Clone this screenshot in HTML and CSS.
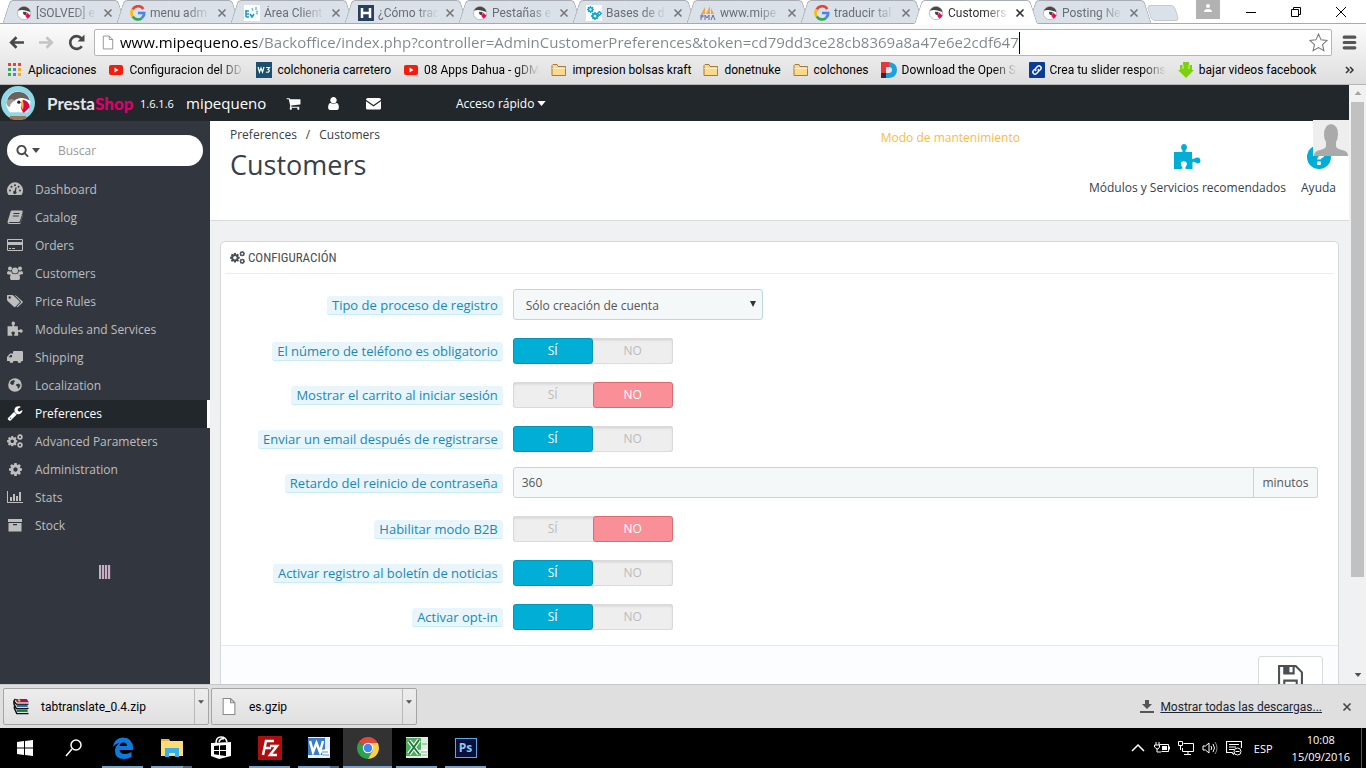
FILE: index.html
```html
<!DOCTYPE html>
<html lang="es">
<head>
    <meta charset="UTF-8">
    <meta name="viewport" content="width=device-width, initial-scale=1.0">
    <title>Customers</title>
    <link rel="stylesheet" href="styles.css">
</head>
<body>
    <!-- Icon sprite -->
    <svg class="sprite" aria-hidden="true">
        <symbol id="puffin" viewBox="0 0 36 36">
            <path d="M5 13C8 5 16 3 22 5c6 1 10 6 11 12l-3 12H8C4 24 3 18 5 13z" fill="#fff"/>
            <path d="M5 14C8 6 15 3 22 5c5 1 9 5 10 10-6-4-12-4-17-1l-5 2z" fill="#6b625d"/>
            <path d="M4 16c3-3 8-3 11-1-4 1-6 4-7 8-3-1-4-4-4-7z" fill="#a39b96"/>
            <circle cx="19" cy="17" r="2" fill="#222"/>
            <path d="M24 14c5 1 8 5 8 9l-7 7c-4-4-5-10-1-16z" fill="#e5004f"/>
            <path d="M23 14c2 3 2 7 1 12-3-3-3-8-1-12z" fill="#f9c032"/>
        </symbol>
        <symbol id="puffin-round" viewBox="0 0 36 36">
            <circle cx="18" cy="18" r="15" fill="#fff" stroke="#b5b9bb" stroke-width="2"/>
            <path d="M4 13C8 5 14 3 20 4c7 1 12 6 12 12l-9-3c-6-2-13-2-19 0z" fill="#4c4644"/>
            <path d="M16 15l8 1-2 7c-5 0-7-4-6-8z" fill="#444"/>
            <path d="M25 17l8 7-7 7-5-6z" fill="#f00b5a"/>
        </symbol>
        <symbol id="google" viewBox="0 0 18 18">
            <path d="M15 4.500A7 7 0 0 0 3 5" fill="none" stroke="#ea4335" stroke-width="3"/>
            <path d="M3 5a7 7 0 0 0 0 8" fill="none" stroke="#fbbc05" stroke-width="3"/>
            <path d="M3 13a7 7 0 0 0 10.500 1.500" fill="none" stroke="#34a853" stroke-width="3"/>
            <path d="M9 9h7a7 7 0 0 1-2.500 5.500" fill="none" stroke="#4285f4" stroke-width="3"/>
        </symbol>
        <symbol id="page" viewBox="0 0 14 16">
            <path d="M1.500.500h7l4 4v11h-11zM8.500.500v4h4" fill="#fff" stroke="#8a8a8a"/>
        </symbol>
        <symbol id="youtube" viewBox="0 0 16 16">
            <rect x="1" y="3" width="14" height="10" rx="2" fill="#f61c0d"/>
            <path d="M6.500 5.500v5l4-2.500z" fill="#fff"/>
        </symbol>
        <symbol id="folder" viewBox="0 0 16 16">
            <path d="M1 13.500v-10l1-1h4l1 2h7.500v9z" fill="#fcd88a" stroke="#a9783a"/>
            <path d="M1.500 6.500h13" stroke="#fff0c4"/>
        </symbol>
        <symbol id="close" viewBox="0 0 10 10">
            <path d="M1.500 1.500l7 7m0-7l-7 7" fill="none" stroke="currentColor" stroke-width="1.600"/>
        </symbol>
        <symbol id="down" viewBox="0 0 10 6"><path d="M0 0h10L5 6z" fill="currentColor"/></symbol>
        <symbol id="search" viewBox="0 0 1792 1792">
            <path fill="currentColor" d="M1216 832q0-185-131.500-316.500t-316.500-131.500-316.500 131.500-131.500 316.500 131.500 316.500 316.500 131.500 316.500-131.500 131.500-316.500zm512 832q0 52-38 90t-90 38q-54 0-90-38l-343-342q-179 124-399 124-143 0-273.500-55.500t-225-150-150-225-55.500-273.500 55.500-273.500 150-225 225-150 273.500-55.500 273.500 55.500 225 150 150 225 55.500 273.500q0 220-124 399l343 343q37 37 37 90z"/>
        </symbol>
        <symbol id="cart" viewBox="0 0 1792 1792">
            <path fill="currentColor" d="M704 1536q0 52-38 90t-90 38-90-38-38-90 38-90 90-38 90 38 38 90zm896 0q0 52-38 90t-90 38-90-38-38-90 38-90 90-38 90 38 38 90zm128-1088v512q0 24-16.500 42.500t-40.500 21.500l-1044 122q13 60 13 70 0 16-24 64h920q26 0 45 19t19 45-19 45-45 19h-1024q-26 0-45-19t-19-45q0-11 8-31.500t16-36 21.500-40 15.500-29.500l-177-823h-204q-26 0-45-19t-19-45 19-45 45-19h256q16 0 28.500 6.500t19.500 15.500 13 24.500 8 26 5.500 29.500 4.500 26h1201q26 0 45 19t19 45z"/>
        </symbol>
        <symbol id="user" viewBox="0 0 1792 1792">
            <path fill="currentColor" d="M1536 1399q0 109-62.500 187t-150.500 78h-854q-88 0-150.500-78t-62.500-187q0-85 8.500-160.500t31.500-152 58.500-131 94-89 134.500-34.500q131 128 313 128t313-128q76 0 134.500 34.500t94 89 58.500 131 31.500 152 8.500 160.500zm-256-887q0 159-112.500 271.500t-271.500 112.500-271.500-112.500-112.500-271.500 112.500-271.500 271.500-112.500 271.500 112.500 112.500 271.500z"/>
        </symbol>
        <symbol id="mail" viewBox="0 0 16 16">
            <path fill="currentColor" d="M0 4q0-2 2-2h12q2 0 2 2L8 9.500zM0 5.700l8 5.500 8-5.500V13q0 1.500-1.500 1.500h-13Q0 14.500 0 13z"/>
        </symbol>
        <symbol id="dashboard" viewBox="0 0 16 16">
            <path fill="currentColor" fill-rule="evenodd" d="M1.500 14A8 8 0 1 1 14.500 14zM2 9.500a1 1 0 1 0 2 0 1 1 0 1 0-2 0zM3.500 5.700a1 1 0 1 0 2 0 1 1 0 1 0-2 0zM7 4.200a1 1 0 1 0 2 0 1 1 0 1 0-2 0zM10.600 5.700a1 1 0 1 0 2 0 1 1 0 1 0-2 0zM12 9.500a1 1 0 1 0 2 0 1 1 0 1 0-2 0zM8.600 6.300l-1 3.500a1.600 1.600 0 1 0 1.300.4l.8-3.600z"/>
        </symbol>
        <symbol id="book" viewBox="0 0 16 16">
            <path fill="currentColor" d="M5 1.500h10q1 .4.700 1.500L13 12q-.4 1-1.500 1H3q-1 0-1 .500t1 .6h9.500q1 0 1.300-1L16 5v1l-2.300 8q-.4 1-1.700 1H2.500Q.5 15 .5 13L3.600 2.500q.4-1 1.400-1z"/>
            <path d="M6.500 4.500h6M5.800 7h6" stroke="#32373f" stroke-width="1"/>
        </symbol>
        <symbol id="card" viewBox="0 0 16 16">
            <path fill="currentColor" fill-rule="evenodd" d="M1 2h14q1 0 1 1v10q0 1-1 1H1q-1 0-1-1V3q0-1 1-1zM1 3v2h14V3zM1 8v5h14V8zM2 11h2v1H2zm3 0h3v1H5z"/>
        </symbol>
        <symbol id="group" viewBox="0 0 16 16">
            <g fill="currentColor"><circle cx="3" cy="3.500" r="2"/><circle cx="13" cy="3.500" r="2"/><circle cx="8" cy="5.500" r="3"/>
            <path d="M0 9q0-3 1.500-3Q3 7 4.400 6.200q0 1.800 1 2.800L3 9.800zM16 9q0-3-1.500-3-1.500 1-2.900.2 0 1.800-1 2.800l2.400.8zM3 13q0-4 2.500-4.500Q8 10 10.500 8.500 13 9 13 13q0 2-1.500 2h-7Q3 15 3 13z"/></g>
        </symbol>
        <symbol id="tags" viewBox="0 0 16 16">
            <path fill="currentColor" fill-rule="evenodd" d="M0 2.500Q0 2 .6 2H5q.8 0 1.400.6l6 5.600q.8.800 0 1.600l-4 4q-.8.800-1.600 0L.6 8Q0 7.400 0 6.600zM1.500 4.500a1.200 1.200 0 1 0 2.400 0 1.200 1.200 0 1 0-2.400 0z"/>
            <path fill="currentColor" d="M7.500 2q.8 0 1.400.6l6.500 5.600q.8.800 0 1.600l-4.300 4q-.8.700-1.500 0l4-4q.8-.8 0-1.600z"/>
        </symbol>
        <symbol id="puzzle" viewBox="0 0 28 28">
            <path fill="currentColor" d="M1 9h7.500q1.800 0 .8-1.800Q7.500 5 8.200 3.200 9 1 11 1t2.800 2.200q.7 1.800-1.100 4Q11.700 9 13.500 9H19v5.800q0 2 1.800 1 4.500-2.600 6.200 0 1.500 4.200-2 4.600-1.500 0-3-1.200-2.500-1-2.500.8v6h-6q-1.700 0-.9-1.900 2.400-3.600.5-5-2.600-1.700-4.800.2-1.200 1.800.8 4.700 1 2-1.100 2H1z"/>
        </symbol>
        <symbol id="truck" viewBox="0 0 16 16">
            <path fill="currentColor" fill-rule="evenodd" d="M6 3q0-1 1-1h8q1 0 1 1v9h-1.500a2 2 0 0 1-4 0H6.500a2 2 0 0 1-4 0H0V8l3-3.500h3zM5 6H3.500L1.500 8.200H5z"/>
        </symbol>
        <symbol id="globe" viewBox="0 0 16 16">
            <circle cx="8" cy="8" r="6.800" fill="currentColor"/>
            <path d="M4 4l3-1 1 1.500-1.500 1.500 1 1L5 8 3 6.500zM9 7.500l2.500-1 2 1.500-1 2.500-1.500 1.500-.5-2.500-1.500-1z" fill="#32373f"/>
        </symbol>
        <symbol id="wrench" viewBox="0 0 1792 1792">
            <path fill="currentColor" d="M448 1472q0-26-19-45t-45-19-45 19-19 45 19 45 45 19 45-19 19-45zm644-420l-682 682q-37 37-90 37-52 0-91-37l-106-108q-38-36-38-90 0-53 38-91l681-681q39 98 114.500 173.500t173.500 114.500zm634-435q0 39-23 106-47 134-164.500 217.500t-258.500 83.500q-185 0-316.500-131.500t-131.500-316.500 131.500-316.500 316.500-131.500q58 0 121.500 16.500t107.500 46.500q16 11 16 28t-16 28l-293 169v224l193 107q5-3 79-48.500t135.500-81 70.500-35.500q15 0 23.500 10t8.500 25z"/>
        </symbol>
        <symbol id="cog" viewBox="128 128 1536 1536">
            <path fill="currentColor" d="M1152 896q0-106-75-181t-181-75-181 75-75 181 75 181 181 75 181-75 75-181zm512-109v222q0 12-8 23t-20 13l-185 28q-19 54-39 91 35 50 107 138 10 12 10 25t-9 23q-27 37-99 108t-94 71q-12 0-26-9l-138-108q-44 23-91 38-16 136-29 186-7 28-36 28h-222q-14 0-24.500-8.500t-11.500-21.500l-28-184q-49-16-90-37l-141 107q-10 9-25 9-14 0-25-11-126-114-165-168-7-10-7-23 0-12 8-23 15-21 51-66.500t54-70.500q-27-50-41-99l-183-27q-13-2-21-12.500t-8-23.500v-222q0-12 8-23t19-13l186-28q14-46 39-92-40-57-107-138-10-12-10-24 0-10 9-23 26-36 98.500-107.500t94.500-71.500q13 0 26 10l138 107q44-23 91-38 16-136 29-186 7-28 36-28h222q14 0 24.500 8.500t11.500 21.500l28 184q49 16 90 37l142-107q9-9 24-9 13 0 25 10 129 119 165 170 7 8 7 22 0 12-8 23-15 21-51 66.500t-54 70.500q26 50 41 98l183 28q13 2 21 12.500t8 23.500z"/>
        </symbol>
        <symbol id="cog-small" viewBox="0 0 16 16"><use href="#cog" x="2" y="2" width="13" height="13"/></symbol>
        <symbol id="cogs" viewBox="0 0 16 16">
            <use href="#cog" x="0" y="3" width="10.500" height="10.500"/>
            <use href="#cog" x="10" y="1" width="6" height="6"/>
            <use href="#cog" x="10" y="9" width="6" height="6"/>
        </symbol>
        <symbol id="chart" viewBox="0 0 16 16">
            <path fill="currentColor" d="M0 2h1v11h15v1H0zM3 8h2v4H3zM6 5h2v7H6zM9 7h2v5H9zM12 3h2v9h-2z"/>
        </symbol>
        <symbol id="archive" viewBox="0 0 16 16">
            <path fill="currentColor" fill-rule="evenodd" d="M1 2h14v3H1zM1.500 6h13v8.500h-13zM6 7v1.200h4V7z"/>
        </symbol>
    </svg>

    <!-- Browser tabs -->
    <div class="tabs">
        <div class="tab"><svg class="favicon"><use href="#puffin-round"/></svg><span class="fade">[SOLVED] e</span><button aria-label="Cerrar"><svg><use href="#close"/></svg></button></div>
        <div class="tab"><svg class="favicon"><use href="#google"/></svg><span class="fade">menu adm</span><button aria-label="Cerrar"><svg><use href="#close"/></svg></button></div>
        <div class="tab"><svg class="favicon" viewBox="0 0 16 16"><path fill="#fff" d="M0 0h16v16H0z"/><path d="M2 5v7m0-6h3M2 9h3m-3 3h3m1-3l2 3 2-3" fill="none" stroke="#1b9ad6" stroke-width="1.600"/><path d="M8 3l1 3m3-4v3m2 1l-2 1m2 2l-2-1" stroke="#6cc3e6" stroke-width="1.500"/></svg><span class="fade">Área Client</span><button aria-label="Cerrar"><svg><use href="#close"/></svg></button></div>
        <div class="tab"><svg class="favicon" viewBox="0 0 16 16"><path fill="#27405f" d="M0 0h16v16H0z"/><path d="M4 3v10m8-10v10M4 8h8" stroke="#fff" stroke-width="2.500"/></svg><span class="fade">¿Cómo trac</span><button aria-label="Cerrar"><svg><use href="#close"/></svg></button></div>
        <div class="tab"><svg class="favicon"><use href="#puffin-round"/></svg><span class="fade">Pestañas e</span><button aria-label="Cerrar"><svg><use href="#close"/></svg></button></div>
        <div class="tab"><svg class="favicon cyan" viewBox="0 0 16 16"><path fill="#fff" d="M0 0h16v16H0z"/><use href="#cog" x="1" y="1" width="7" height="7"/><use href="#cog" x="5" y="7" width="8" height="8"/><use href="#cog" x="11" y="6" width="5" height="5"/></svg><span class="fade">Bases de d</span><button aria-label="Cerrar"><svg><use href="#close"/></svg></button></div>
        <div class="tab"><svg class="favicon" viewBox="0 0 16 16"><path d="M1 9l4-7v7zM6 9l4-8v8zM11 9V3l3 6z" fill="#f5a13c"/><path d="M1 15v-5h2v2H1m4 3v-5l2 3 2-3v5m2 0l2-5 2 5" fill="none" stroke="#666a9c"/></svg><span class="fade">www.mipe</span><button aria-label="Cerrar"><svg><use href="#close"/></svg></button></div>
        <div class="tab"><svg class="favicon"><use href="#google"/></svg><span class="fade">traducir tal</span><button aria-label="Cerrar"><svg><use href="#close"/></svg></button></div>
        <div class="tab active"><svg class="favicon"><use href="#puffin-round"/></svg><span class="fade">Customers</span><button aria-label="Cerrar"><svg><use href="#close"/></svg></button></div>
        <div class="tab"><svg class="favicon"><use href="#puffin-round"/></svg><span class="fade">Posting Ne</span><button aria-label="Cerrar"><svg><use href="#close"/></svg></button></div>
        <button class="new-tab" aria-label="Nueva pestaña"></button>
        <div class="window-buttons">
            <button class="profile" aria-label="Perfil"><svg viewBox="0 0 24 19"><circle cx="12" cy="6" r="2" fill="#fff"/><path d="M8 12q0-3 4-3t4 3z" fill="#fff"/></svg></button>
            <button aria-label="Minimizar"><svg viewBox="0 0 12 12"><path d="M1 6.500h10" stroke="#000"/></svg></button>
            <button aria-label="Restaurar"><svg viewBox="0 0 12 12"><path d="M1.500 3.500h7v7h-7zM3.500 3V1.500h7v7H9" fill="none" stroke="#000"/></svg></button>
            <button aria-label="Cerrar ventana"><svg viewBox="0 0 12 12"><path d="M1 1l10 10M11 1L1 11" stroke="#000"/></svg></button>
        </div>
    </div>

    <div class="chrome">
        <div class="toolbar">
            <button aria-label="Atrás"><svg viewBox="0 0 16 16"><path d="M15 8H3m5-5L3 8l5 5" fill="none" stroke="#484848" stroke-width="2.500"/></svg></button>
            <button aria-label="Adelante"><svg viewBox="0 0 16 16"><path d="M1 8h12M8 3l5 5-5 5" fill="none" stroke="#c4c4c4" stroke-width="2.500"/></svg></button>
            <button aria-label="Recargar"><svg viewBox="0 0 16 16"><path d="M13 11.500A6 6 0 1 1 12.500 4" fill="none" stroke="#484848" stroke-width="2.500"/><path d="M15.500.500V7H9z" fill="#484848"/></svg></button>
            <div class="address">
                <svg class="page-icon"><use href="#page"/></svg>
                <input type="text" aria-label="Dirección" value="www.mipequeno.es/Backoffice/index.php?controller=AdminCustomerPreferences&amp;token=cd79dd3ce28cb8369a8a47e6e2cdf647">
                <span class="caret"></span>
                <button aria-label="Añadir a marcadores"><svg viewBox="0 0 18 18"><path d="M9 1l2.400 5.500 5.800.500-4.400 4 1.300 5.800L9 13.800l-5.100 3L5.200 11 .8 7l5.800-.5z" fill="#fff" stroke="#777"/></svg></button>
            </div>
            <button aria-label="Menú"><svg viewBox="0 0 16 16"><path d="M3 3h10M3 8h10M3 13h10" stroke="#555" stroke-width="3" stroke-linecap="round"/></svg></button>
        </div>
        <nav class="bookmarks">
            <a href="#"><svg viewBox="0 0 16 16"><path d="M1 1h3v3H1zM6 1h3v3H6zM11 1h3v3h-3z" fill="#ea4335"/><path d="M1 6h3v3H1zM1 11h3v3H1z" fill="#34a853"/><path d="M6 6h3v3H6zM6 11h3v3H6z" fill="#4285f4"/><path d="M11 6h3v3h-3zM11 11h3v3h-3z" fill="#f5a81c"/></svg><span>Aplicaciones</span></a>
            <a href="#"><svg><use href="#youtube"/></svg><span class="fade">Configuracion del DD</span></a>
            <a href="#"><svg viewBox="0 0 16 16"><path d="M0 0h16v16H0z" fill="#1d4f6e"/><path d="M2 5l1.500 5L5 6l1.500 4L8 5m2 .500h3.500L12 7.500q2 .5 1 2-1 1.200-3 .5" fill="none" stroke="#fff" stroke-width="1.200"/></svg><span>colchoneria carretero</span></a>
            <a href="#"><svg><use href="#youtube"/></svg><span class="fade">08 Apps Dahua - gDM</span></a>
            <a href="#"><svg><use href="#folder"/></svg><span>impresion bolsas kraft</span></a>
            <a href="#"><svg><use href="#folder"/></svg><span>donetnuke</span></a>
            <a href="#"><svg><use href="#folder"/></svg><span>colchones</span></a>
            <a href="#"><svg viewBox="0 0 16 16"><path d="M0 0h8v5H5v6H0z" fill="#e8343b"/><path d="M0 11h5v5H0z" fill="#3c2430"/><path d="M8 0q8 1 8 8t-8 8H5v-5h3q3 0 3-3T8 5z" fill="#1ba1dc"/></svg><span class="fade">Download the Open S</span></a>
            <a href="#"><svg viewBox="0 0 16 16"><rect width="16" height="16" rx="1" fill="#0a3c96"/><path d="M7 9a2.500 2.500 0 0 1 0-3l1.500-1.500a2 2 0 0 1 3 3L10 9M9 7a2.500 2.500 0 0 1 0 3l-1.500 1.500a2 2 0 0 1-3-3L6 7" fill="none" stroke="#fff" stroke-width="1.400"/></svg><span class="fade">Crea tu slider respons</span></a>
            <a href="#"><svg viewBox="0 0 16 16"><path d="M5 0h6v3h3v5h2l-8 8-8-8h2V3h3z" fill="#7bd10c"/><path d="M5 3v4m6-4v4" stroke="#d6f5a8"/></svg><span>bajar videos facebook</span></a>
            <button aria-label="Más marcadores"><svg viewBox="0 0 10 8"><path d="M1 1l3 3-3 3m4-6l3 3-3 3" fill="none" stroke="#333" stroke-width="1.500"/></svg></button>
        </nav>
    </div>

    <!-- Back office -->
    <div class="viewport">
        <div class="backoffice">
            <header class="topbar">
                <svg class="logo" viewBox="0 0 36 36"><circle cx="18" cy="18" r="17" fill="#8fd8e6"/><use href="#puffin" x="3" y="3" width="30" height="30"/><path d="M10 31h16v3q-8 2-16 0z" fill="#97785e"/></svg>
                <a href="#" class="brand">Presta<b>Shop</b></a>
                <span class="version">1.6.1.6</span>
                <a href="#" class="shop-name">mipequeno</a>
                <a href="#" class="notice" aria-label="Pedidos"><svg><use href="#cart"/></svg></a>
                <a href="#" class="notice" aria-label="Clientes"><svg><use href="#user"/></svg></a>
                <a href="#" class="notice" aria-label="Mensajes"><svg><use href="#mail"/></svg></a>
                <button class="quick">Acceso rápido <svg><use href="#down"/></svg></button>
                <svg class="avatar" viewBox="0 0 36 36"><path fill="#eee" d="M0 0h36v36H0z"/><path d="M1 36q0-5 6-6 6-1.500 6-4v-4q-2-3-2-7 0-10 7-11 7 1 7 10 0 5-2 8v4q0 2.500 6 4 6 1 6 6z" fill="#aaa"/></svg>
            </header>
            <div class="columns">
                <aside class="sidebar">
                    <form class="search">
                        <button type="button" aria-label="Buscar en"><svg class="lens"><use href="#search"/></svg><svg class="arrow"><use href="#down"/></svg></button>
                        <input type="text" placeholder="Buscar" aria-label="Buscar">
                    </form>
                    <ul class="menu">
                        <li><a href="#"><svg><use href="#dashboard"/></svg>Dashboard</a></li>
                        <li><a href="#"><svg><use href="#book"/></svg>Catalog</a></li>
                        <li><a href="#"><svg><use href="#card"/></svg>Orders</a></li>
                        <li><a href="#"><svg><use href="#group"/></svg>Customers</a></li>
                        <li><a href="#"><svg><use href="#tags"/></svg>Price Rules</a></li>
                        <li><a href="#"><svg><use href="#puzzle"/></svg>Modules and Services</a></li>
                        <li><a href="#"><svg><use href="#truck"/></svg>Shipping</a></li>
                        <li><a href="#"><svg><use href="#globe"/></svg>Localization</a></li>
                        <li class="current"><a href="#"><svg><use href="#wrench"/></svg>Preferences</a></li>
                        <li><a href="#"><svg><use href="#cogs"/></svg>Advanced Parameters</a></li>
                        <li><a href="#"><svg><use href="#cog-small"/></svg>Administration</a></li>
                        <li><a href="#"><svg><use href="#chart"/></svg>Stats</a></li>
                        <li><a href="#"><svg><use href="#archive"/></svg>Stock</a></li>
                    </ul>
                    <button class="collapse" aria-label="Contraer menú"></button>
                </aside>
                <main>
                    <div class="page-head">
                        <div class="page-title">
                            <div class="breadcrumb"><a href="#">Preferences</a><span>/</span><a href="#">Customers</a></div>
                            <h1>Customers</h1>
                        </div>
                        <a href="#" class="maintenance">Modo de mantenimiento</a>
                        <div class="page-tools">
                            <a href="#"><svg><use href="#puzzle"/></svg>Módulos y Servicios recomendados</a>
                            <a href="#"><svg viewBox="0 0 28 28"><circle cx="14" cy="14" r="12" fill="currentColor"/><path d="M10 11q0-4 4-4t4 4q0 2-2.500 3-1.500.800-1.500 2.500M14 18.500v3.500" fill="none" stroke="#fff" stroke-width="3.500"/></svg>Ayuda</a>
                        </div>
                    </div>
                    <form class="panel">
                        <h3><svg><use href="#cogs"/></svg>Configuración</h3>
                        <div class="row">
                            <div class="name"><label for="tipo">Tipo de proceso de registro</label></div>
                            <div class="field">
                                <div class="select"><select id="tipo"><option>Sólo creación de cuenta</option></select></div>
                            </div>
                        </div>
                        <div class="row">
                            <div class="name"><span id="l-tel">El número de teléfono es obligatorio</span></div>
                            <div class="field"><div class="switch" role="radiogroup" aria-labelledby="l-tel">
                                <input type="radio" name="tel" id="tel-si" checked><label for="tel-si">Sí</label><input type="radio" name="tel" id="tel-no"><label for="tel-no" class="no">No</label>
                            </div></div>
                        </div>
                        <div class="row">
                            <div class="name"><span id="l-car">Mostrar el carrito al iniciar sesión</span></div>
                            <div class="field"><div class="switch" role="radiogroup" aria-labelledby="l-car">
                                <input type="radio" name="car" id="car-si"><label for="car-si">Sí</label><input type="radio" name="car" id="car-no" checked><label for="car-no" class="no">No</label>
                            </div></div>
                        </div>
                        <div class="row">
                            <div class="name"><span id="l-mail">Enviar un email después de registrarse</span></div>
                            <div class="field"><div class="switch" role="radiogroup" aria-labelledby="l-mail">
                                <input type="radio" name="mail" id="mail-si" checked><label for="mail-si">Sí</label><input type="radio" name="mail" id="mail-no"><label for="mail-no" class="no">No</label>
                            </div></div>
                        </div>
                        <div class="row">
                            <div class="name"><label for="retardo">Retardo del reinicio de contraseña</label></div>
                            <div class="field">
                                <div class="input-group"><input type="text" id="retardo" value="360"><span>minutos</span></div>
                            </div>
                        </div>
                        <div class="row">
                            <div class="name"><span id="l-b2b">Habilitar modo B2B</span></div>
                            <div class="field"><div class="switch" role="radiogroup" aria-labelledby="l-b2b">
                                <input type="radio" name="b2b" id="b2b-si"><label for="b2b-si">Sí</label><input type="radio" name="b2b" id="b2b-no" checked><label for="b2b-no" class="no">No</label>
                            </div></div>
                        </div>
                        <div class="row">
                            <div class="name"><span id="l-bol">Activar registro al boletín de noticias</span></div>
                            <div class="field"><div class="switch" role="radiogroup" aria-labelledby="l-bol">
                                <input type="radio" name="bol" id="bol-si" checked><label for="bol-si">Sí</label><input type="radio" name="bol" id="bol-no"><label for="bol-no" class="no">No</label>
                            </div></div>
                        </div>
                        <div class="row">
                            <div class="name"><span id="l-opt">Activar opt-in</span></div>
                            <div class="field"><div class="switch" role="radiogroup" aria-labelledby="l-opt">
                                <input type="radio" name="opt" id="opt-si" checked><label for="opt-si">Sí</label><input type="radio" name="opt" id="opt-no"><label for="opt-no" class="no">No</label>
                            </div></div>
                        </div>
                        <div class="panel-footer">
                            <button type="button" aria-label="Guardar"><svg viewBox="0 0 26 26"><path d="M2 2h16l6 6v16H2zM7 24v-8h12v8M7 2v7h9V2" fill="none" stroke="#4a5054" stroke-width="2"/><path d="M7 2h5v7H7z" fill="#4a5054"/></svg></button>
                        </div>
                    </form>
                </main>
            </div>
        </div>
        <div class="scrollbar">
            <svg class="up"><use href="#down"/></svg>
            <div class="thumb"></div>
            <svg><use href="#down"/></svg>
        </div>
    </div>

    <div class="downloads">
        <div class="download">
            <button class="file"><svg viewBox="0 0 18 18"><path d="M3 1h12l2 3v1H5z" fill="#a5124e"/><path d="M4 6.500h12V10H5z" fill="#1f6fb5"/><path d="M4 12h12v3.500H5z" fill="#127a45"/><path d="M3 1L1.500 3.500 4 6.500h13M1.500 3.500v3L4 11h13M2 7v4l2.500 5.500H17" fill="none" stroke="#111" stroke-width="1.500"/><path d="M5 5.200h12M5 10h11M5 15.300h11" stroke="#eee"/><path d="M6 1.500l2 2" stroke="#e9c34a" stroke-width="2"/></svg>tabtranslate_0.4.zip</button>
            <button class="more" aria-label="Opciones"><svg><use href="#down"/></svg></button>
        </div>
        <div class="download">
            <button class="file"><svg><use href="#page"/></svg>es.gzip</button>
            <button class="more" aria-label="Opciones"><svg><use href="#down"/></svg></button>
        </div>
        <svg class="save-icon" viewBox="0 0 14 14"><path d="M5 0h4v4h3L7 9 2 4h3zM0 11h14v2H0z" fill="#555"/></svg>
        <a href="#">Mostrar todas las descargas...</a>
        <button class="dismiss" aria-label="Cerrar"><svg><use href="#close"/></svg></button>
    </div>

    <div class="taskbar">
        <button aria-label="Inicio"><svg viewBox="0 0 24 24"><path d="M4 6l7-1v6.500H4zM12 5l8-1v7.500h-8zM4 12.500h7V19l-7-1zM12 12.500h8V20l-8-1z" fill="#fff"/></svg></button>
        <button aria-label="Buscar"><svg viewBox="0 0 24 24"><circle cx="14" cy="9" r="5" fill="none" stroke="#fff" stroke-width="1.500"/><path d="M10 13l-6 7" stroke="#fff" stroke-width="1.500"/></svg></button>
        <button class="open" aria-label="Edge"><svg viewBox="0 0 24 24"><path d="M2 11Q3 2 12 1.500 22 2 22 12v2H8.500q.5 4 5.500 4 3.500 0 6.500-2v5q-3.500 2-7.500 2-9 0-9-8 0-5 4.500-8Q4.500 7.500 2 11zm6.500-1H16q0-3.500-3.500-3.500T8.500 10z" fill="#0e7bdc" fill-rule="evenodd"/></svg></button>
        <button class="open stacked" aria-label="Explorador"><svg viewBox="0 0 24 24"><path d="M1 3h8l1 2h13v15H1z" fill="#fbdc78"/><path d="M1 3h8v2H1z" fill="#e8b73a"/><path d="M5 12h14v9h-4v-4H9v4H5z" fill="#35b0e8"/></svg></button>
        <button aria-label="Tienda"><svg viewBox="0 0 24 24"><path d="M2 7l20-1v14l-12 3-8-3z" fill="#fff"/><path d="M7 7q0-6 5-6t6 5M10 6q1-4 5-3" fill="none" stroke="#fff" stroke-width="1.500"/><path d="M5 10l5-.5V14H5zM11 9.500l6-.5v5h-6zM5 15h5v4l-5-.8zM11 15h6v5l-6-.8z" fill="#000"/></svg></button>
        <button class="open" aria-label="FileZilla"><svg viewBox="0 0 24 24"><path d="M.5.500h23v23H.500z" fill="#b30b0b" stroke="#e22" stroke-dasharray="1 1"/><path d="M5 19L8 5h8M6.500 12H13m-1-2h7l-7 9h7" fill="none" stroke="#fff" stroke-width="2.500"/></svg></button>
        <button class="open stacked" aria-label="Word"><svg viewBox="0 0 24 24"><path d="M1 1h22v21H1z" fill="#e6eef9"/><path d="M1 2h17v17H1z" fill="#3c7cc9"/><path d="M3 5l3 11 3.500-9L13 16l3-11" fill="none" stroke="#fff" stroke-width="2.500"/><path d="M13 14l9-1v7l-5 1z" fill="#fff"/><path d="M15 16h6m-5 3h6" stroke="#5f8fce"/></svg></button>
        <button class="open focused" aria-label="Chrome"><svg viewBox="0 0 24 24"><path d="M12 12L2.500 6.500A11 11 0 0 1 21.500 6.500z" fill="#dd4b3e"/><path d="M12 12L2.500 6.500A11 11 0 0 0 12 23l5-8z" fill="#2ba24c"/><path d="M12 7h9.800A11 11 0 0 1 12 23l5-9z" fill="#fdd047"/><circle cx="12" cy="12" r="5.200" fill="#fff"/><circle cx="12" cy="12" r="4.200" fill="#4286f5"/></svg></button>
        <button class="open" aria-label="Excel"><svg viewBox="0 0 24 24"><path d="M1 1h22v21H1z" fill="#dcefdc"/><path d="M1 2h15v18H1z" fill="#4fae5f"/><path d="M4 5l10 13m0-14L4 18" stroke="#fff" stroke-width="4"/><path d="M4 5l10 13m0-14L4 18" stroke="#1f7a38" stroke-width="2"/><path d="M14 14l8-1v8l-5-1z" fill="#fff"/><path d="M17 8h5m-6 8h6m-5 3h5" stroke="#6db57d"/></svg></button>
        <button class="open photoshop" aria-label="Photoshop"><span>Ps</span></button>
        <div class="tray">
            <svg viewBox="0 0 16 16"><path d="M2 11l6-6 6 6" fill="none" stroke="#fff" stroke-width="1.500"/></svg>
            <svg viewBox="0 0 16 16"><path d="M5.500 4.500h9v7h-7M15.500 6.500v3M2 2v3m3-3v3M.500 5h5v2l-1.500 2h-1L.500 7zM3 9v3h4" fill="none" stroke="#fff"/><path d="M8 6h5v4H8z" fill="#fff"/></svg>
            <svg viewBox="0 0 16 16"><path d="M5.500 3.500h10v8h-11V8M10 12v3m-4-.500h7M.500 1.500h4v4h-4zM2.500 6v4" fill="none" stroke="#fff"/></svg>
            <svg viewBox="0 0 16 16"><path d="M1 6h2.500L7 3v10l-3.500-3H1zM9 6q1.500 2 0 4m2-6q3 4 0 8" fill="none" stroke="#fff"/><path d="M13 2q4 6 0 12" fill="none" stroke="#888"/></svg>
            <svg viewBox="0 0 16 16"><path d="M15.500 8V1.500H.500v11H6l2 2M3 4.500h10M3 7h7M3 9.500h5" fill="none" stroke="#fff" stroke-width="1.200"/><circle cx="11.500" cy="11.500" r="3.500" fill="#000" stroke="#fff"/><path d="M9.500 11.500h4" stroke="#fff"/></svg>
            <span class="lang">ESP</span>
            <div class="clock"><span>10:08</span><span>15/09/2016</span></div>
        </div>
    </div>
</body>
</html>
```
FILE: styles.css
```css
* {
    box-sizing: border-box;
}
body {
    font-family: 'Open Sans', 'Noto Sans', sans-serif;
    font-size: 12px;
    margin: 0;
    height: 100vh;
    display: flex;
    flex-direction: column;
    overflow: hidden;
    background: #fff;
    color: #000;
}
a {
    color: inherit;
    text-decoration: none;
}
button {
    font: inherit;
    color: inherit;
    background: none;
    border: none;
    padding: 0;
    cursor: pointer;
}
svg {
    display: block;
    flex: none;
}
.sprite {
    position: absolute;
    width: 0;
    height: 0;
}
.fade {
    white-space: nowrap;
    -webkit-mask-image: linear-gradient(to left, transparent, #000 24px);
    mask-image: linear-gradient(to left, transparent, #000 24px);
}

/* Tabs */
.tabs {
    flex: none;
    display: flex;
    height: 24px;
    padding-left: 7px;
    background: #fff;
    box-shadow: inset 0 -1px #a9a9a9;
    font-family: Roboto, sans-serif;
}
.tab {
    position: relative;
    z-index: 0;
    flex: 0 1 114px;
    min-width: 0;
    display: flex;
    align-items: center;
    padding: 2px 8px 0 9px;
    color: #6a6d71;
}
.tab::before,
.tab::after {
    content: "";
    position: absolute;
    z-index: -1;
    top: 0;
    bottom: 0;
    width: 55%;
    background: #dbe1e8;
    border: 1px solid #a9adb3;
    border-bottom-color: #a9a9a9;
}
.tab::before {
    left: -1px;
    border-right: none;
    border-radius: 4px 0 0 0;
    transform: skewX(-18deg);
}
.tab::after {
    right: -1px;
    border-left: none;
    border-radius: 0 4px 0 0;
    transform: skewX(18deg);
}
.tab.active {
    z-index: 2;
    color: #333;
}
.tab.active::before,
.tab.active::after {
    background: #fff;
    border-bottom-color: #fff;
}
.tab .favicon {
    width: 16px;
    height: 16px;
    margin-right: 4px;
}
.favicon.cyan {
    color: #12a5cf;
}
.tab .fade {
    flex: 1;
}
.tab button {
    margin-left: 6px;
    color: #777;
}
.tab.active button {
    color: #333;
}
.tab button svg {
    width: 10px;
    height: 10px;
}
.new-tab {
    width: 28px;
    height: 16px;
    margin: 5px 0 0 2px;
    background: #dbe1e8;
    border: 1px solid #c5cad1;
    border-radius: 4px;
    transform: skewX(18deg);
}
.window-buttons {
    margin-left: auto;
    margin-right: 3px;
    display: flex;
    align-items: center;
}
.window-buttons button {
    width: 45px;
}
.window-buttons button svg {
    width: 12px;
    height: 12px;
    margin: 0 auto;
}
.window-buttons .profile {
    align-self: flex-start;
    width: 24px;
    height: 19px;
    margin-right: 8px;
    background: #b2b2b2;
}
.window-buttons .profile svg {
    width: 24px;
    height: 19px;
}

/* Toolbar and bookmarks */
.chrome {
    flex: none;
    height: 61px;
    background: linear-gradient(#fcfcfc, #dedede);
    border-bottom: 1px solid #b5b5b5;
}
.toolbar {
    display: flex;
    align-items: center;
    height: 37px;
    padding: 0 8px;
    gap: 13px;
}
.toolbar svg {
    width: 17px;
    height: 17px;
}
.address {
    flex: 1;
    min-width: 0;
    display: flex;
    align-items: center;
    height: 27px;
    margin-left: -4px;
    margin-right: -4px;
    padding: 0 3px 0 7px;
    background: #fff;
    border: 1px solid #b5b5b5;
    border-radius: 2px;
}
.address .page-icon {
    width: 12px;
    height: 15px;
    margin-right: 6px;
}
.address input {
    field-sizing: content;
    padding: 0 0 2px;
    border: none;
    outline: none;
    font: 15px 'Open Sans', sans-serif;
    color: transparent;
    background: linear-gradient(to right, #000 137px, #80868b 137px);
    -webkit-background-clip: text;
    background-clip: text;
}
.caret {
    width: 1px;
    height: 22px;
    background: #000;
}
.address button {
    margin-left: auto;
}
.address button svg {
    width: 19px;
    height: 19px;
}
.bookmarks {
    display: flex;
    align-items: center;
    height: 18px;
    padding: 0 11px 0 7px;
    gap: 12px;
    font-family: Roboto, sans-serif;
}
.bookmarks a {
    display: flex;
    align-items: center;
    gap: 5px;
    white-space: nowrap;
}
.bookmarks .fade {
    min-width: 115px;
}
.bookmarks svg {
    width: 16px;
    height: 16px;
}
.bookmarks button {
    margin-left: auto;
}
.bookmarks button svg {
    width: 10px;
    height: 8px;
}

/* Page area */
.viewport {
    flex: 1;
    min-height: 0;
    display: flex;
    overflow: hidden;
}
.backoffice {
    flex: 1;
    min-width: 0;
    display: flex;
    flex-direction: column;
    overflow: hidden;
}
.topbar {
    position: relative;
    flex: none;
    display: flex;
    align-items: center;
    height: 36px;
    background: #22272b;
    color: #fff;
}
.logo {
    width: 36px;
    height: 36px;
    margin-right: 11px;
}
.brand {
    font-family: Lato, sans-serif;
    font-size: 17px;
    font-weight: bold;
    width: 93px;
    color: #e4e6e7;
}
.brand b {
    color: #df0067;
}
.version {
    font-size: 11px;
    width: 46px;
}
.shop-name {
    font-size: 15px;
    width: 100px;
}
.notice {
    width: 40px;
}
.notice svg {
    width: 15px;
    height: 15px;
}
.quick {
    display: flex;
    align-items: center;
    gap: 3px;
    margin-left: 50px;
}
.quick svg {
    width: 9px;
    height: 5px;
}
.avatar {
    position: absolute;
    right: 0;
    top: 35px;
    width: 36px;
    height: 36px;
}
.columns {
    flex: 1;
    min-height: 0;
    display: flex;
}
.sidebar {
    flex: 0 0 210px;
    background: #32373f;
    color: #bebebe;
    padding-top: 14px;
}
.search {
    display: flex;
    align-items: center;
    height: 31px;
    margin: 0 7px 10px;
    padding-left: 9px;
    background: #fff;
    border-radius: 16px;
    color: #4a4a4a;
}
.search button {
    display: flex;
    align-items: center;
    gap: 3px;
    width: 42px;
}
.lens {
    width: 13px;
    height: 13px;
}
.arrow {
    width: 8px;
    height: 5px;
}
.search input {
    width: 120px;
    padding: 0;
    border: none;
    outline: none;
    font: inherit;
}
.search input::placeholder {
    color: #999;
}
.menu {
    list-style: none;
    margin: 0;
    padding: 0;
}
.menu a {
    display: flex;
    align-items: center;
    gap: 12px;
    height: 28px;
    padding: 0 0 2px 7px;
}
.menu svg {
    width: 16px;
    height: 16px;
}
.menu .current {
    background: #22272b;
    border-right: 3px solid #fff;
    color: #fff;
}
.collapse {
    display: block;
    width: 12px;
    height: 14px;
    margin: 25px auto 0;
    background: repeating-linear-gradient(to right, #c0b2c0 0, #c0b2c0 2px, #5a3f5c 2px, #5a3f5c 3px);
}
main {
    flex: 1;
    min-width: 0;
    background: #eff1f2;
    overflow: hidden;
}
.page-head {
    display: flex;
    height: 100px;
    padding: 5px 13px 0 20px;
    background: #fff;
    border-bottom: 1px solid #d9dcde;
    color: #36414a;
}
.page-title {
    flex: 1;
}
.breadcrumb {
    display: flex;
    gap: 9px;
    line-height: 18px;
}
h1 {
    margin: 3px 0 0;
    font-size: 27px;
    font-weight: normal;
    line-height: 36px;
}
.maintenance {
    margin: 3px 69px 0 0;
    line-height: 18px;
    color: #fbbb43;
}
.page-tools {
    display: flex;
    gap: 15px;
    padding-top: 17px;
}
.page-tools a {
    display: flex;
    flex-direction: column;
    align-items: center;
    gap: 8px;
    line-height: 18px;
}
.page-tools svg {
    width: 28px;
    height: 28px;
    color: #00aed6;
}

/* Settings panel */
.panel {
    margin: 20px 10px 0;
    padding: 0 20px;
    background: #fff;
    border: 1px solid #d3d8db;
    border-radius: 5px;
}
h3 {
    display: flex;
    align-items: center;
    gap: 3px;
    height: 32px;
    margin: 0 -16px 15px;
    padding-left: 5px;
    border-bottom: 1px solid #eaedef;
    font: 13px 'Ubuntu Condensed', 'Roboto Condensed', Roboto, sans-serif;
    text-transform: uppercase;
    color: #4a4f55;
}
h3 svg {
    width: 15px;
    height: 15px;
}
.row {
    display: flex;
    margin: 0 -5px 15px;
}
.name {
    flex: 0 0 25%;
    padding: 6px 5px 0;
    text-align: right;
    font-size: 13px;
    line-height: 20px;
    color: #1c87b5;
}
.name label,
.name span {
    padding: 0 5px;
    background: #e8f6fc;
    border-bottom: 1px solid #c8ecf9;
    border-radius: 3px;
}
.field {
    flex: 1;
    min-width: 0;
    padding: 0 5px;
}
.select {
    position: relative;
    width: 250px;
}
.select::after {
    content: "";
    position: absolute;
    right: 7px;
    top: 12px;
    border: 3px solid transparent;
    border-top: 6px solid #333;
    border-bottom: none;
}
select {
    display: block;
    appearance: none;
    width: 100%;
    height: 31px;
    padding: 2px 12px 0;
    background: #f5f8f9;
    border: 1px solid #c0d8dd;
    border-radius: 3px;
    font: inherit;
    color: #555;
}
.input-group {
    display: flex;
    height: 31px;
    color: #555;
}
.input-group input {
    flex: 1;
    min-width: 0;
    padding: 0 8px;
    background: #f5f8f9;
    border: 1px solid #c0d8dd;
    border-radius: 3px 0 0 3px;
    font: inherit;
    color: #555;
}
.input-group span {
    width: 64px;
    line-height: 29px;
    text-align: center;
    background: #f5f8f9;
    border: 1px solid #c0d8dd;
    border-left: none;
    border-radius: 0 3px 3px 0;
}
.switch {
    display: flex;
    width: 160px;
    height: 26px;
    margin-top: 3px;
    background: #eee;
    border-radius: 3px;
    box-shadow: inset 0 0 0 1px #dadada, inset 0 2px 3px rgba(0, 0, 0, 0.12);
}
.switch input {
    appearance: none;
    width: 0;
    margin: 0;
}
.switch label {
    flex: 1;
    line-height: 24px;
    text-align: center;
    text-transform: uppercase;
    border: 1px solid transparent;
    border-radius: 3px;
    color: #bbb;
    cursor: pointer;
}
.switch input:checked + label {
    background: #00aed6;
    border-color: #0097ba;
    color: #fff;
}
.switch input:checked + .no {
    background: #f99098;
    border-color: #e2686f;
}
.panel-footer {
    display: flex;
    justify-content: flex-end;
    align-items: flex-start;
    height: 73px;
    margin: 0 -20px;
    padding: 10px 15px;
    background: #fcfdfe;
    border-top: 1px solid #e6e9ea;
}
.panel-footer button {
    width: 65px;
    height: 56px;
    background: #fff;
    border: 1px solid #d8dbdd;
    border-radius: 3px;
}
.panel-footer svg {
    width: 27px;
    height: 27px;
    margin: -14px auto 0;
}
.scrollbar {
    flex: none;
    display: flex;
    flex-direction: column;
    align-items: center;
    width: 17px;
    padding: 6px 0 7px;
    background: #f1f1f1;
    color: #505050;
}
.scrollbar svg {
    width: 8px;
    height: 4px;
}
.scrollbar .up {
    transform: rotate(180deg);
    color: #a3a3a3;
}
.thumb {
    width: 13px;
    height: 81%;
    margin: 7px 0 auto;
    background: #c1c1c1;
}

/* Downloads */
.downloads {
    flex: none;
    display: flex;
    align-items: center;
    height: 44px;
    padding: 0 14px 0 3px;
    background: #dfdfdf;
    border-top: 1px solid #c4c8ca;
    font-family: Roboto, sans-serif;
}
.download {
    display: flex;
    width: 206px;
    height: 37px;
    margin-right: 2px;
    background: linear-gradient(#ededed, #e0e0e0);
    border: 1px solid #a5a5a5;
    border-radius: 2px;
}
.file {
    flex: 1;
    display: flex;
    align-items: center;
    gap: 11px;
    padding-left: 8px;
}
.file svg {
    width: 18px;
    height: 17px;
}
.more {
    width: 14px;
    padding: 11px 3px;
    border-left: 1px solid #b8b8b8;
    color: #555;
    align-self: stretch;
    display: flex;
}
.more svg {
    width: 6px;
    height: 4px;
}
.save-icon {
    width: 14px;
    height: 14px;
    margin: 0 6px 0 auto;
}
.downloads a {
    color: #1a2430;
    text-decoration: underline;
}
.dismiss {
    margin-left: 20px;
    color: #444;
}
.dismiss svg {
    width: 10px;
    height: 10px;
}

/* Taskbar */
.taskbar {
    flex: none;
    display: flex;
    height: 40px;
    background: #000;
    color: #fff;
    font-size: 11px;
}
.taskbar button {
    position: relative;
    width: 49px;
    display: flex;
    align-items: center;
    justify-content: center;
}
.taskbar button svg {
    width: 24px;
    height: 24px;
}
.open::after {
    content: "";
    position: absolute;
    left: 4px;
    right: 4px;
    bottom: 0;
    height: 2px;
    background: #76a0cc;
}
.open.stacked::after {
    background: linear-gradient(to right, #76a0cc 32px, #4c6885 32px);
}
.taskbar .focused {
    background: #323232;
}
.focused::after {
    left: 0;
    right: 0;
}
.photoshop span {
    width: 22px;
    height: 20px;
    line-height: 17px;
    background: #0a0f3c;
    border: 1px solid #5aa9e6;
    color: #8fc7f3;
    font-size: 12px;
    font-weight: bold;
}
.tray {
    margin-left: auto;
    display: flex;
    align-items: center;
    gap: 8px;
    margin-right: 4px;
    padding-right: 11px;
    border-right: 1px solid #555;
}
.tray svg {
    width: 16px;
    height: 16px;
}
.lang {
    margin: 0 11px 0 4px;
}
.clock {
    display: flex;
    flex-direction: column;
    align-items: center;
    line-height: 17px;
}
```
